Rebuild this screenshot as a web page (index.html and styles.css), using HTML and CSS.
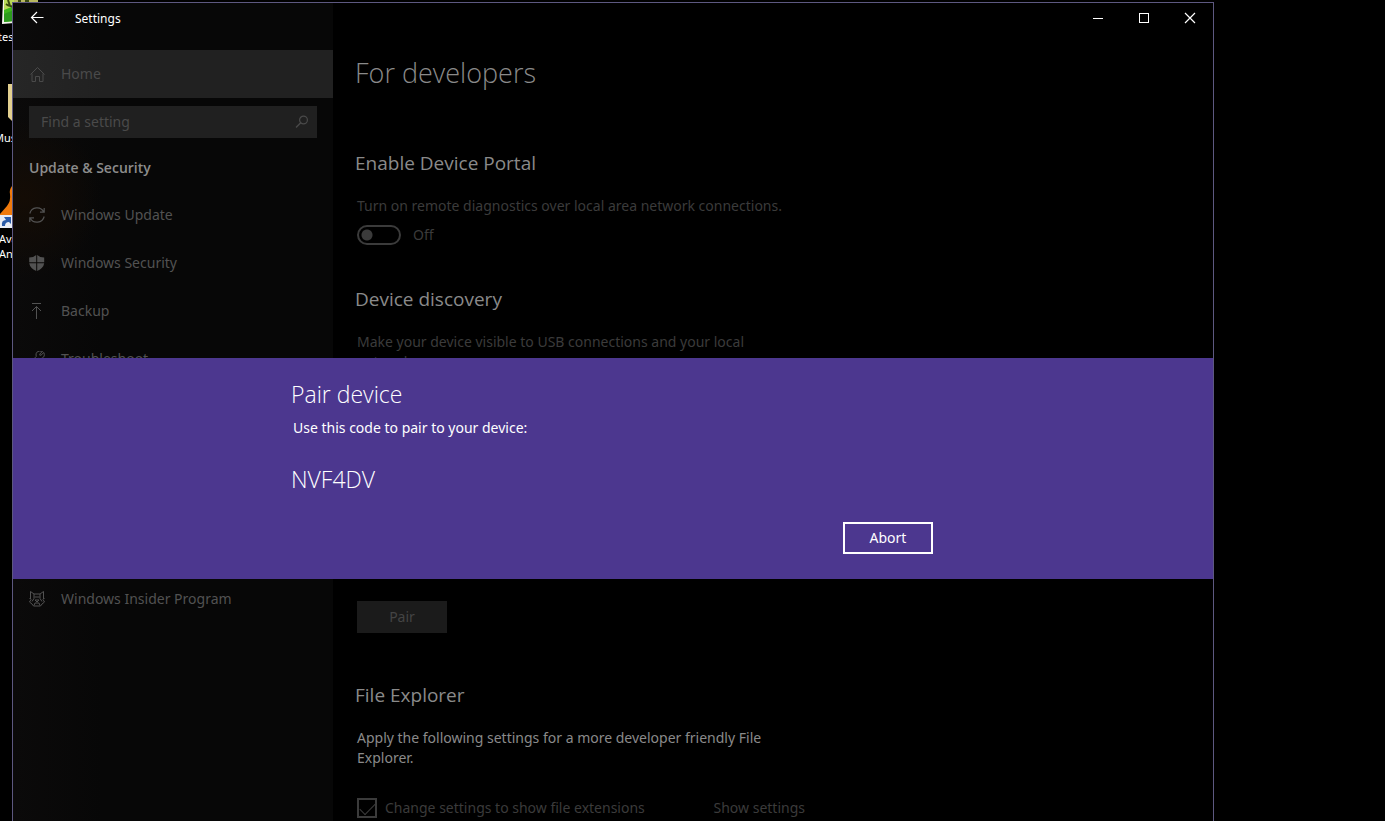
FILE: index.html
```html
<!DOCTYPE html>
<html lang="en">
<head>
<meta charset="utf-8">
<title>Settings</title>
<link rel="stylesheet" href="styles.css">
</head>
<body>
<div class="desktop">
  <div class="shortcut shortcut-game">
    <svg width="36" height="24" viewBox="0 0 36 24" aria-hidden="true"><path d="M1 0H36V2H12V23L0 24Z" fill="#f4f4ec"/><path d="M2 0H36V2H12V21L2 22Z" fill="#3fb51c"/><path d="M2 14L12 10V21L2 22Z" fill="#2c9a1c"/><path d="M2 0H12V6L2 10Z" fill="#b9d957"/><path d="M12 0H36V2H12Z" fill="#b8b860"/><path d="M6 0L8 6L12 7M16 1H19M23 1H27M4 4L7 6" stroke="#3a4a10" stroke-width="2" fill="none"/></svg>
    <span class="shortcut-label">tes</span>
  </div>
  <div class="shortcut shortcut-folder">
    <svg width="12" height="38" viewBox="0 0 12 38" aria-hidden="true"><path d="M8 0H12V37L8 33Z" fill="#e3d08f"/></svg>
    <span class="shortcut-label">Mus</span>
  </div>
  <div class="shortcut shortcut-app">
    <svg width="12" height="44" viewBox="0 0 12 44" aria-hidden="true"><path d="M12 0Q9 4 10 8Q11 15 7 20L0 28V32H12Z" fill="#f07a0c"/><rect y="29" width="12" height="13" fill="#e8ecf4"/><path d="M2 40Q1 34 6 34L4 31H11V38L9 36Q5 36 5 40Z" fill="#2a5ba8"/></svg>
    <span class="shortcut-label">Ava</span>
    <span class="shortcut-label">Ant</span>
  </div>
</div>

<div class="window">
  <aside class="sidebar">
    <header class="titlebar">
      <button class="back" aria-label="Back"><svg width="14" height="14" viewBox="0 0 14 14"><path d="M13.500 6.500H1.500M7 1L1.500 6.500L7 12" fill="none" stroke="currentColor" stroke-width="1.200"/></svg></button>
      <span class="app-name">Settings</span>
    </header>
    <a class="nav-item home" href="#home">
      <svg class="icon" viewBox="0 0 16 16"><path d="M1.500 8.500L8.500 1.500L15.500 8.500M3 7.500V15.500H6.500V10.500H10.500V15.500H14V7.500" fill="none" stroke="currentColor"/></svg>
      <span>Home</span>
    </a>
    <label class="search">
      <input type="text" placeholder="Find a setting" aria-label="Find a setting">
      <svg class="search-icon" viewBox="0 0 14 14"><circle cx="8.500" cy="5" r="3.900" fill="none" stroke="currentColor" stroke-width="1.200"/><path d="M5.700 7.800L1 12.500" stroke="currentColor" stroke-width="1.300"/></svg>
    </label>
    <h2 class="nav-title">Update &amp; Security</h2>
    <nav>
      <a class="nav-item" href="#update">
        <svg class="icon" viewBox="0 0 16 16"><path d="M.8 6.500A7.500 7.500 0 0 1 14.800 5M15.200 1V5.200H11M15.200 9.500A7.500 7.500 0 0 1 1.200 11M.8 15V10.800H5" fill="none" stroke="currentColor" stroke-width="1.200"/></svg>
        <span>Windows Update</span>
      </a>
      <a class="nav-item" href="#security">
        <svg class="icon" viewBox="0 0 16 16"><path d="M7.200 0V7.200H.2V2.500Q4.500 2.500 7.200 0ZM8.200 0Q11 2.500 15.200 2.500V7.200H8.200ZM.2 8.200H7.200V16Q1 13 .2 8.200ZM8.200 8.200H15.200Q14.500 13 8.200 16Z" fill="currentColor"/></svg>
        <span>Windows Security</span>
      </a>
      <a class="nav-item" href="#backup">
        <svg class="icon" viewBox="0 0 16 16"><path d="M3 .5H12M7.500 16V3.500M3 8L7.500 3.500L12 8" fill="none" stroke="currentColor"/></svg>
        <span>Backup</span>
      </a>
      <a class="nav-item" href="#troubleshoot">
        <svg class="icon" viewBox="0 0 16 16"><path d="M13.500 .3L10.800 3V4.200H12L14.800 1.500Q16.500 5.500 13 7.300Q11 8 9.500 7.300L3.500 13.300Q2.200 14.300 1.200 13.300Q.5 12.200 1.500 11.200L7.200 5.500Q6.300 2.500 8.300 .8Q10.500 -.5 13.500 .3Z" fill="none" stroke="currentColor"/></svg>
        <span>Troubleshoot</span>
      </a>
      <a class="nav-item insider" href="#insider">
        <svg class="icon" viewBox="0 0 16 16"><path d="M1.500 8V.5L5 3H11L14.500 .5V8M.5 7L2 8.500L.5 11L3 13L4.500 15H11.500L13 13L15.500 11L14 8.500L15.500 7M5 3V7.500L3 10.500M11 3V7.500L13 10.500M5.500 6H10.500M6 9H10L8 11ZM5 14.500L6 12H10L11 14.500" fill="none" stroke="currentColor"/></svg>
        <span>Windows Insider Program</span>
      </a>
    </nav>
  </aside>

  <main class="main">
    <div class="caption">
      <button class="caption-btn" aria-label="Minimize"><svg width="12" height="12" viewBox="0 0 12 12"><path d="M1 6.500H11" stroke="currentColor"/></svg></button>
      <button class="caption-btn" aria-label="Maximize"><svg width="12" height="12" viewBox="0 0 12 12"><rect x="1.500" y="1.500" width="9" height="9" fill="none" stroke="currentColor"/></svg></button>
      <button class="caption-btn" aria-label="Close"><svg width="12" height="12" viewBox="0 0 12 12"><path d="M1 1L11 11M11 1L1 11" stroke="currentColor" stroke-width="1.200"/></svg></button>
    </div>
    <div class="content">
      <h1>For developers</h1>
      <section class="portal">
        <h2>Enable Device Portal</h2>
        <p class="muted">Turn on remote diagnostics over local area network connections.</p>
        <label class="toggle"><input type="checkbox" role="switch"><span>Off</span></label>
      </section>
      <section class="discovery">
        <h2>Device discovery</h2>
        <p class="muted">Make your device visible to USB connections and your local network.</p>
        <button class="pair">Pair</button>
      </section>
      <section class="explorer">
        <h2>File Explorer</h2>
        <p>Apply the following settings for a more developer friendly File Explorer.</p>
        <div class="option-row">
          <label class="option"><input type="checkbox" checked><span>Change settings to show file extensions</span></label>
          <a href="#show">Show settings</a>
        </div>
      </section>
    </div>
  </main>

  <div class="overlay">
    <div class="dialog" role="dialog" aria-labelledby="pair-title">
      <div class="dialog-body">
        <h2 class="dialog-title" id="pair-title">Pair device</h2>
        <p class="dialog-text">Use this code to pair to your device:</p>
        <p class="code">NVF4DV</p>
        <button class="abort">Abort</button>
      </div>
    </div>
  </div>
</div>
</body>
</html>
```

FILE: styles.css
```css
* { box-sizing: border-box; margin: 0; padding: 0; }
body {
  height: 100vh;
  overflow: hidden;
  padding: 2px 171px 0 12px;
  background: #000;
  color: #8a8a8a;
  font: 14px/20px "Segoe UI", "Noto Sans", "Open Sans", sans-serif;
}
button, input { font: inherit; color: inherit; }
button { border: 0; background: none; }
a { color: inherit; text-decoration: none; }
svg { display: block; flex: none; }
h1, h2 { font-family: "Segoe UI", "Open Sans", sans-serif; }

/* Desktop shortcuts behind the window */
.desktop { position: absolute; inset: 0; overflow: hidden; color: #fff; font-size: 11px; line-height: 15px; }
.shortcut { position: absolute; left: 0; }
.shortcut-label { display: block; width: 20px; }
.shortcut-game { top: 0; left: 2px; }
.shortcut-game .shortcut-label { margin: 5px 0 0 -4px; }
.shortcut-folder { top: 84px; }
.shortcut-folder .shortcut-label { margin: 8px 0 0 -6px; }
.shortcut-app { top: 186px; }
.shortcut-app .shortcut-label { margin-left: -1px; }
.shortcut-app svg { margin-bottom: 1px; }

/* The window runs past the bottom of the screen */
.window {
  position: relative;
  display: grid;
  grid-template-columns: 320px 1fr;
  height: calc(100vh + 112px);
  border: 1px solid #5d5880;
  background: #000;
}

.sidebar {
  background: radial-gradient(circle at 10px 195px, #140c05, transparent 80px), linear-gradient(90deg, #0b0a0a, #070707 90px);
  color: #525252;
}
.titlebar { display: flex; align-items: flex-start; height: 47px; color: #fff; }
.back { display: grid; place-items: center; width: 48px; height: 30px; }
.app-name { padding-left: 14px; font-size: 12px; line-height: 32px; }
.nav-item { display: flex; align-items: center; gap: 16px; height: 48px; padding: 0 16px; }
.icon { width: 16px; height: 16px; }
.home { background: linear-gradient(90deg, #262626, #212121 90px); color: #4a4a4a; }
.search { display: flex; align-items: center; height: 32px; margin: 8px 16px 20px; padding: 0 8px 0 12px; background: #202020; color: #4a4a4a; }
.search input { flex: 1; min-width: 0; border: 0; background: none; outline: 0; }
.search input::placeholder { color: #4a4a4a; opacity: 1; }
.search-icon { width: 14px; height: 14px; }
.nav-title { margin-bottom: 13px; padding: 0 16px; color: #8c8c8c; font-size: 14px; font-weight: 600; line-height: 20px; }
.insider { margin-top: 192px; }

.caption { display: flex; justify-content: flex-end; color: #fff; }
.caption-btn { display: grid; place-items: center; width: 46px; height: 30px; }
.content { padding: 20px 24px 0 22px; }
.content > * { max-width: 450px; }
h1 { margin-bottom: 56px; font-size: 27px; font-weight: 300; line-height: 40px; }
.content h2 { margin-bottom: 19px; font-size: 19px; font-weight: 400; line-height: 28px; }
.content p { max-width: 442px; padding-left: 2px; }
.muted { color: #3b3b3b; }
.toggle { display: flex; align-items: center; gap: 12px; margin: 9px 0 0 2px; color: #3b3b3b; }
.toggle input {
  appearance: none;
  width: 44px;
  height: 20px;
  border: 2px solid #3b3b3b;
  border-radius: 10px;
  background: radial-gradient(circle at 8px 8px, #3b3b3b 5px, transparent 6px);
}
.discovery { padding-top: 40px; }
.explorer { padding-top: 48px; }
.pair { display: block; width: 90px; height: 32px; margin: 229px 0 0 2px; background: #1b1b1b; color: #444; }
.option-row { display: flex; justify-content: space-between; margin: 30px 0 0 2px; color: #3b3b3b; }
.option { display: flex; align-items: center; gap: 8px; }
.option input {
  appearance: none;
  display: grid;
  justify-items: center;
  width: 20px;
  height: 20px;
  border: 2px solid #3b3b3b;
}
.option input:checked::before {
  content: "";
  width: 14px;
  height: 7px;
  margin-top: 3px;
  border: solid #3b3b3b;
  border-width: 0 0 1px 1px;
  transform: rotate(-45deg);
}

.overlay { position: absolute; inset: 0; display: grid; align-items: center; }
.dialog { padding: 20px 24px 25px; background: #4c378f; color: #fff; }
.dialog-body { max-width: 640px; margin: 0 auto; }
.dialog-title, .code { margin-left: -2px; font-family: "Segoe UI", "Open Sans", sans-serif; font-size: 23px; font-weight: 300; line-height: 32px; }
.dialog-text { margin: 8px 0 25px; }
.abort { display: block; width: 90px; height: 32px; margin: 27px 0 0 auto; border: 2px solid #fff; }
```
